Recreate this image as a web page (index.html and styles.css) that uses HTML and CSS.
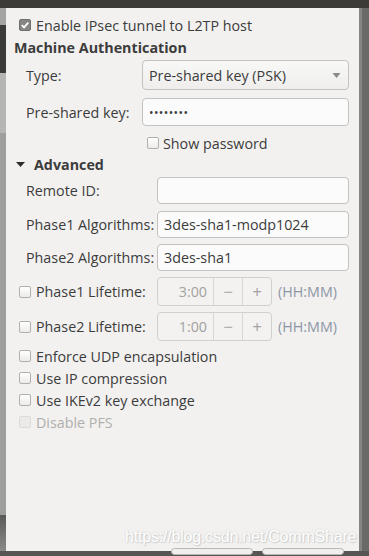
FILE: index.html
```html
<!DOCTYPE html>
<html>
<head>
<meta charset="utf-8">
<link rel="stylesheet" href="styles.css">
</head>
<body>
<div class="screen">
  <div class="topbar"></div>
  <div class="middle">
    <div class="bg-left">
      <div class="bl-a"></div>
      <div class="bl-b"></div>
      <div class="bl-c"></div>
      <div class="bl-d"></div>
      <div class="bl-e"></div>
    </div>
    <div class="dialog">
      <div class="row row-enable">
        <span class="cb checked"><svg viewBox="0 0 12 12" width="12" height="12"><path d="M2.8 6.2 L5 8.4 L9.3 3.6" fill="none" stroke="#fff" stroke-width="1.7"/></svg></span>
        <span class="txt">Enable IPsec tunnel to L2TP host</span>
      </div>
      <div class="heading h-ma">Machine Authentication</div>
      <div class="row row-type">
        <span class="lbl lbl1">Type:</span>
        <div class="combo"><span>Pre-shared key (PSK)</span><svg class="arrow" viewBox="0 0 8 5" width="9" height="5"><path d="M0 0 L8 0 L4 5 Z" fill="#8a8a8a"/></svg></div>
      </div>
      <div class="row row-psk">
        <span class="lbl lbl1">Pre-shared key:</span>
        <div class="entry entry1"><span class="dots">••••••••</span></div>
      </div>
      <div class="row row-show">
        <span class="cb"></span>
        <span class="txt">Show password</span>
      </div>
      <div class="row row-adv">
        <svg class="tri" viewBox="0 0 9 5" width="9" height="5"><path d="M0 0 L9 0 L4.5 5 Z" fill="#2e2e2e"/></svg>
        <span class="heading">Advanced</span>
      </div>
      <div class="row row-remote">
        <span class="lbl lbl2">Remote ID:</span>
        <div class="entry entry2"></div>
      </div>
      <div class="row row-ph1">
        <span class="lbl lbl2">Phase1 Algorithms:</span>
        <div class="entry entry2"><span>3des-sha1-modp1024</span></div>
      </div>
      <div class="row row-ph2">
        <span class="lbl lbl2">Phase2 Algorithms:</span>
        <div class="entry entry2"><span>3des-sha1</span></div>
      </div>
      <div class="row row-life row-life1">
        <span class="cb"></span>
        <span class="lbl lbl3">Phase1 Lifetime:</span>
        <div class="spin">
          <span class="spin-val">3:00</span>
          <span class="spin-btn">−</span>
          <span class="spin-btn">+</span>
        </div>
        <span class="unit">(HH:MM)</span>
      </div>
      <div class="row row-life row-life2">
        <span class="cb"></span>
        <span class="lbl lbl3">Phase2 Lifetime:</span>
        <div class="spin">
          <span class="spin-val">1:00</span>
          <span class="spin-btn">−</span>
          <span class="spin-btn">+</span>
        </div>
        <span class="unit">(HH:MM)</span>
      </div>
      <div class="row row-opt row-opt1">
        <span class="cb"></span>
        <span class="txt">Enforce UDP encapsulation</span>
      </div>
      <div class="row row-opt">
        <span class="cb"></span>
        <span class="txt">Use IP compression</span>
      </div>
      <div class="row row-opt">
        <span class="cb"></span>
        <span class="txt">Use IKEv2 key exchange</span>
      </div>
      <div class="row row-opt">
        <span class="cb disabled"></span>
        <span class="txt disabled-txt">Disable PFS</span>
      </div>
      <div class="buttons">
        <span class="btn btn1"></span>
        <span class="btn btn2"></span>
      </div>
    </div>
    <div class="bg-right">
      <div class="br-light"></div>
      <div class="br-dark"></div>
    </div>
  </div>
  <div class="bottombar"></div>
  <div class="watermark">https://blog.csdn.net/CommShare</div>
</div>
</body>
</html>
```
FILE: styles.css
```css
* { box-sizing: border-box; }
html, body { margin: 0; padding: 0; }
body {
  width: 369px;
  height: 556px;
  overflow: hidden;
  font-family: "Open Sans", "Noto Sans", sans-serif;
  font-size: 14.3px;
  color: #3c3c3c;
  background: #4a4a48;
}
.screen {
  position: relative;
  width: 369px;
  height: 556px;
  display: flex;
  flex-direction: column;
}
.topbar { height: 8px; background: #3c3b37; flex: none; }
.middle { height: 543px; display: flex; flex: none; }
.bottombar { flex: 1; background: #555553; }

.bg-left { width: 6px; display: flex; flex-direction: column; flex: none; }
.bl-a { height: 17px; background: #a3a3a1; }
.bl-b { height: 48px; background: #3b3b39; }
.bl-c { height: 60px; background: #b5b5b3; }
.bl-d { flex: 1; background: #9e9e9c; }
.bl-e { height: 36px; background: linear-gradient(#5a5a58, #8a8a88); }

.bg-right { width: 10px; display: flex; flex: none; }
.br-light { width: 3px; background: #858583; }
.br-dark { flex: 1; background: #6a6a68; }

.dialog {
  width: 353px;
  flex: none;
  background: #f2f1f0;
  position: relative;
  display: flex;
  flex-direction: column;
  padding-top: 7px;
}
.row { display: flex; align-items: center; flex: none; }
.txt { white-space: nowrap; }
.heading { font-weight: bold; white-space: nowrap; }

.cb {
  width: 12px; height: 12px;
  border: 1px solid #b2b0ad;
  border-radius: 2px;
  background: linear-gradient(#ffffff, #ecebea);
  flex: none;
  display: flex;
}
.cb.checked { background: #868684; border-color: #6f6f6d; }
.cb.checked svg { margin: -1px; }
.cb.disabled { border-color: #dcdbd9; background: #ebeae9; }
.disabled-txt { color: #b0afad; }

.row-enable { height: 20px; padding-left: 13px; gap: 5px; }
.h-ma { height: 20px; line-height: 20px; margin-top: 3px; padding-left: 8px; flex: none; }

.lbl { white-space: nowrap; flex: none; }
.lbl1 { width: 116px; }
.lbl2 { width: 131px; }
.lbl3 { width: 121px; }

.row-type { height: 30px; margin-top: 2px; padding-left: 20px; }
.row-psk { height: 28px; margin-top: 8px; padding-left: 20px; }

.combo, .entry {
  height: 100%;
  border: 1px solid #c4c2bf;
  border-radius: 4px;
  display: flex;
  align-items: center;
  white-space: nowrap;
}
.combo {
  width: 207px;
  background: linear-gradient(#f8f8f7, #efeeed);
  padding-left: 6px;
  justify-content: space-between;
  padding-right: 7px;
}
.entry { background: #fbfbfb; padding-left: 6px; }
.entry1 { width: 207px; }
.entry2 { width: 192px; }
.dots { font-size: 12px; letter-spacing: 0.4px; color: #3c3c3c; }

.row-show { height: 18px; margin-top: 8px; padding-left: 141px; gap: 4px; }
.row-adv { height: 18px; margin-top: 3px; padding-left: 10px; gap: 9px; }

.row-remote { height: 27px; margin-top: 4px; padding-left: 20px; }
.row-ph1 { height: 27px; margin-top: 7px; padding-left: 20px; }
.row-ph2 { height: 27px; margin-top: 6px; padding-left: 20px; }

.row-life { height: 29px; margin-top: 6px; padding-left: 13px; }
.row-life .cb { margin-right: 5px; }
.spin {
  width: 115px; height: 100%;
  border: 1px solid #d2d0cd;
  border-radius: 4px;
  background: #f3f2f1;
  display: flex;
  color: #a3a2a0;
}
.spin-val { flex: 1; text-align: right; padding-right: 6px; align-self: center; }
.spin-btn {
  width: 29px;
  border-left: 1px solid #d8d6d3;
  display: flex; align-items: center; justify-content: center;
  font-size: 17px; color: #a5a4a2;
}
.unit { margin-left: 6px; color: #8d96a5; white-space: nowrap; }

.row-opt { height: 20px; margin-top: 2px; padding-left: 13px; gap: 5px; }
.row-opt1 { margin-top: 5px; }

.buttons {
  position: absolute;
  left: 165px; bottom: -4px;
  display: flex; gap: 9px;
}
.btn {
  width: 82px; height: 7px;
  border: 1px solid #b9b7b4;
  border-radius: 4px;
  background: #f0efee;
}

.watermark {
  position: absolute;
  left: 125px; top: 528px;
  font-family: "Liberation Sans", Arial, sans-serif;
  font-size: 16px;
  color: #ffffff;
  text-shadow: 0 0 2px #c8c8c8, 1px 1px 1px #d0d0d0;
  white-space: nowrap;
  letter-spacing: -0.2px;
}
```
